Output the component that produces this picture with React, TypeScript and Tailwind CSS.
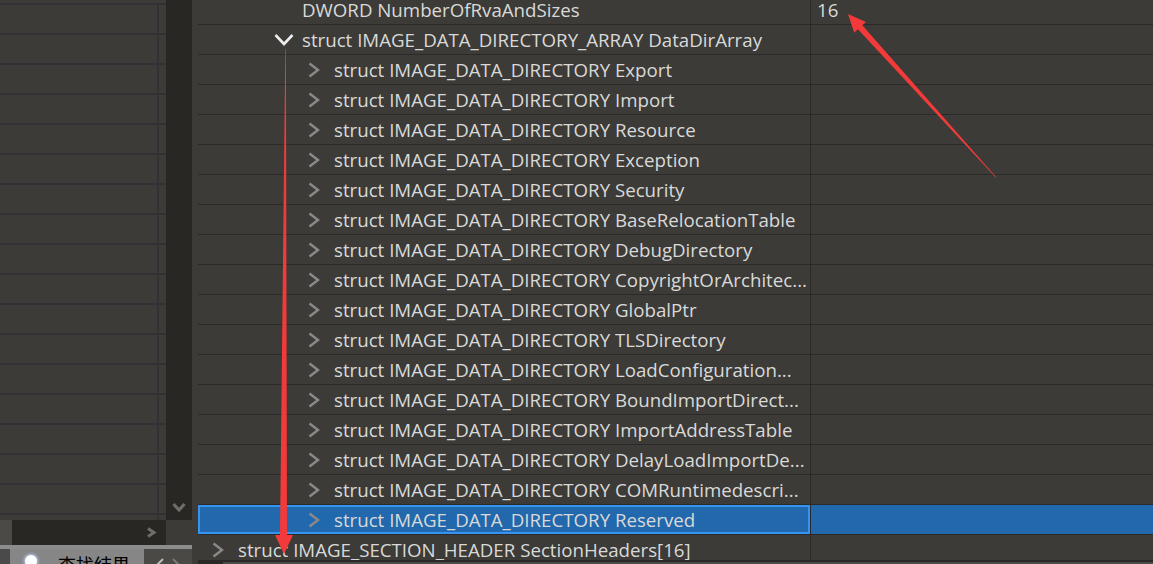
import React from "react";

const children = [
  "Export",
  "Import",
  "Resource",
  "Exception",
  "Security",
  "BaseRelocationTable",
  "DebugDirectory",
  "CopyrightOrArchitec...",
  "GlobalPtr",
  "TLSDirectory",
  "LoadConfiguration...",
  "BoundImportDirect...",
  "ImportAddressTable",
  "DelayLoadImportDe...",
  "COMRuntimedescri...",
  "Reserved",
];

function ChevronRight() {
  return (
    <svg width="14" height="16" viewBox="0 0 14 16" className="block">
      <path d="M2.5 1.5 L11 8 L2.5 14.5" fill="none" stroke="#8a8a8a" strokeWidth="2.4" />
    </svg>
  );
}

function ChevronDown() {
  return (
    <svg width="20" height="14" viewBox="0 0 20 14" className="block">
      <path d="M1.5 2 L10 11 L18.5 2" fill="none" stroke="#ededed" strokeWidth="2.6" />
    </svg>
  );
}

type RowProps = {
  pad: string;
  icon?: "right" | "down";
  iconBox?: string;
  text: string;
  value?: string;
  selected?: boolean;
};

function Row({ pad, icon, iconBox, text, value, selected }: RowProps) {
  return (
    <div className="flex h-[30px] shrink-0 border-b border-[#2b2a28]">
      <div
        className={
          selected
            ? "flex w-[612px] shrink-0 items-center overflow-hidden whitespace-nowrap border-2 border-[#3594f2] bg-[#2168ad]"
            : "flex w-[612px] shrink-0 items-center overflow-hidden whitespace-nowrap"
        }
      >
        <div className={pad} />
        {icon && (
          <div className={iconBox + " flex shrink-0 items-center"}>
            {icon === "right" ? <ChevronRight /> : <ChevronDown />}
          </div>
        )}
        <span className="mt-[2px] text-[18.7px] leading-none text-[#d9d9d9]">{text}</span>
      </div>
      <div className="w-px shrink-0 bg-[#2b2a28]" />
      <div
        className={
          selected
            ? "flex flex-1 items-center bg-[#2168ad] pl-[6px]"
            : "flex flex-1 items-center pl-[6px]"
        }
      >
        {value && (
          <span className="mt-[2px] text-[18.7px] leading-none text-[#d9d9d9]">{value}</span>
        )}
      </div>
    </div>
  );
}

export default function App() {
  const leftRows = Array.from({ length: 18 });
  return (
    <div className="relative flex h-[564px] w-[1153px] overflow-hidden bg-[#3c3b37] font-['Open_Sans','Noto_Sans',sans-serif]">
      {/* Left panel */}
      <div className="flex w-[192px] shrink-0 flex-col">
        <div className="flex h-[520px] shrink-0">
          <div className="flex h-[520px] w-[166px] flex-col overflow-hidden pt-[3px]">
            {leftRows.map((_, i) => (
              <div key={i} className="flex h-[30px] shrink-0 flex-col">
                <div className="h-[2px] shrink-0 bg-[#323135]" />
                <div className="flex flex-1">
                  <div className="w-[157px]" />
                  <div className="w-[2px] bg-[#323135]" />
                  <div className="flex-1" />
                </div>
              </div>
            ))}
          </div>
          <div className="flex w-[26px] flex-col items-center justify-end bg-[#282723] pb-[7px]">
            <svg width="14" height="11" viewBox="0 0 14 11" className="block">
              <path d="M1.5 2 L7 8 L12.5 2" fill="none" stroke="#6e6d6a" strokeWidth="3.2" />
            </svg>
          </div>
        </div>
        <div className="flex h-[25px] shrink-0">
          <div className="flex w-[166px] items-center justify-between bg-[#282723] pr-[9px]">
            <div className="h-full w-[12px] bg-[#4b4a47]" />
            <svg width="11" height="11" viewBox="0 0 11 11" className="block">
              <path d="M2 1.5 L8 5.5 L2 9.5" fill="none" stroke="#6e6d6a" strokeWidth="3" />
            </svg>
          </div>
          <div className="flex-1" />
        </div>
        <div className="flex h-[19px] shrink-0 flex-col">
          <div className="h-[4px] shrink-0 bg-[#8c8c8c]" />
          <div className="flex flex-1">
            <div className="w-[10px] bg-[#4a4a4a]" />
            <div className="flex w-[134px] items-start gap-[21px] bg-[#868686] pl-[15px] pt-[6px]">
              <div className="h-[12px] w-[12px] shrink-0 rounded-full bg-white shadow-[0_0_3px_1px_rgba(190,210,255,0.9)]" />
              <span className="font-['Noto_Sans_CJK_SC',sans-serif] text-[18px] leading-none text-black">
                查找结果
              </span>
            </div>
            <div className="flex flex-1 items-start gap-[6px] bg-[#4a4946] pl-[11px] pt-[9px]">
              <svg width="10" height="10" viewBox="0 0 10 10" className="block">
                <path d="M8 1 L2 7" fill="none" stroke="#bdbdbd" strokeWidth="2" />
              </svg>
              <svg width="10" height="10" viewBox="0 0 10 10" className="block">
                <path d="M2 1 L8 7" fill="none" stroke="#7a7a7a" strokeWidth="2" />
              </svg>
            </div>
          </div>
        </div>
      </div>

      {/* Right panel */}
      <div className="flex flex-1 flex-col pl-[6px]">
        <div className="h-[560px] shrink-0 overflow-hidden">
          <div className="-mt-[5px] flex flex-col">
            <Row pad="w-[104px] shrink-0" text="DWORD NumberOfRvaAndSizes" value="16" />
            <Row
              pad="w-[76px] shrink-0"
              icon="down"
              iconBox="w-[28px]"
              text="struct IMAGE_DATA_DIRECTORY_ARRAY DataDirArray"
            />
            {children.map((c, i) => (
              <Row
                key={c}
                pad={i === children.length - 1 ? "w-[107px] shrink-0" : "w-[109px] shrink-0"}
                icon="right"
                iconBox="w-[27px]"
                text={"struct IMAGE_DATA_DIRECTORY " + c}
                selected={i === children.length - 1}
              />
            ))}
            <Row
              pad="w-[13px] shrink-0"
              icon="right"
              iconBox="w-[27px]"
              text="struct IMAGE_SECTION_HEADER SectionHeaders[16]"
            />
          </div>
        </div>
        <div className="h-[2px] shrink-0 bg-[#2a2927]" />
        <div className="flex h-[2px] shrink-0">
          <div className="w-[25px] bg-[#2a2927]" />
          <div className="flex-1 bg-[#4a4a48]" />
        </div>
      </div>

      {/* Red annotation arrows */}
      <svg
        className="pointer-events-none absolute left-0 top-0"
        width="1153"
        height="564"
        viewBox="0 0 1153 564"
      >
        <polygon
          points="848,14 866,21.9 862.3,25.3 996.3,177.3 995.7,177.6 857.9,29.3 854.2,32.7"
          fill="#f23a3a"
        />
        <polygon
          points="285.3,49 285.9,49 287,535 293,535 284,554 275,535 280,535"
          fill="#f23a3a"
        />
      </svg>
    </div>
  );
}
